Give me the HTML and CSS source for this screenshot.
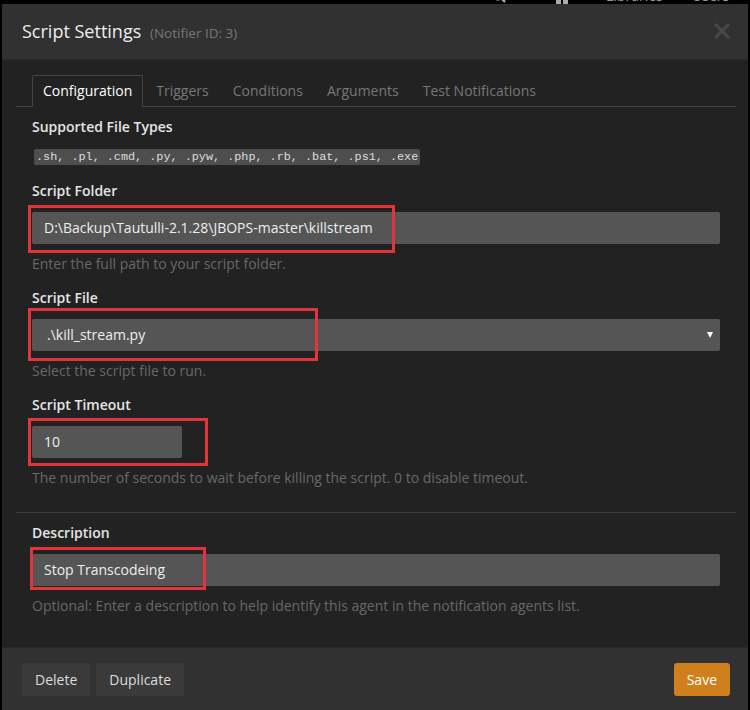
FILE: index.html
```html
<!DOCTYPE html>
<html>
<head>
<meta charset="utf-8">
<link rel="stylesheet" href="styles.css">
</head>
<body>
<div class="topnav">
  <span class="nav-icon nav-search"><svg width="14" height="14" viewBox="0 0 14 14"><circle cx="6" cy="6" r="4.5" fill="none" stroke="#aaa" stroke-width="2"/><path d="M9 9 L13 13" stroke="#aaa" stroke-width="2.4"/></svg></span>
  <span class="nav-icon nav-grid"><svg width="12" height="14" viewBox="0 0 12 14"><rect x="0" y="0" width="5" height="14" fill="#aaa"/><rect x="7" y="0" width="5" height="14" fill="#aaa"/></svg></span>
  <span class="nav-link nav-lib">Libraries</span>
  <span class="nav-link nav-users">Users</span>
</div>
<div class="modal">
  <div class="modal-header">
    <h4 class="modal-title">Script Settings <small class="sub">(Notifier ID: 3)</small></h4>
    <span class="close"><svg width="16" height="16" viewBox="0 0 16 16"><path d="M2 2 L14 14 M14 2 L2 14" stroke="#474747" stroke-width="3.2" stroke-linecap="round"/></svg></span>
  </div>
  <div class="modal-body">
    <ul class="tabs">
      <li class="tab active">Configuration</li>
      <li class="tab">Triggers</li>
      <li class="tab">Conditions</li>
      <li class="tab">Arguments</li>
      <li class="tab">Test Notifications</li>
    </ul>
    <div class="tab-content">
      <div class="group group-first">
        <label class="label">Supported File Types</label>
        <code class="types">.sh, .pl, .cmd, .py, .pyw, .php, .rb, .bat, .ps1, .exe</code>
      </div>
      <div class="group group-second">
        <label class="label">Script Folder</label>
        <div class="field">
          <div class="input">D:\Backup\Tautulli-2.1.28\JBOPS-master\killstream</div>
          <span class="mark mark-folder"></span>
        </div>
        <p class="help">Enter the full path to your script folder.</p>
      </div>
      <div class="group">
        <label class="label">Script File</label>
        <div class="field">
          <div class="input select"><span class="sel-text">.\kill_stream.py</span><span class="caret"></span></div>
          <span class="mark mark-file"></span>
        </div>
        <p class="help">Select the script file to run.</p>
      </div>
      <div class="group">
        <label class="label">Script Timeout</label>
        <div class="field">
          <div class="input input-short">10</div>
          <span class="mark mark-timeout"></span>
        </div>
        <p class="help">The number of seconds to wait before killing the script. 0 to disable timeout.</p>
      </div>
    </div>
    <hr class="sep">
    <div class="tab-content">
      <div class="group group-desc">
        <label class="label">Description</label>
        <div class="field">
          <div class="input">Stop Transcodeing</div>
          <span class="mark mark-desc"></span>
        </div>
        <p class="help">Optional: Enter a description to help identify this agent in the notification agents list.</p>
      </div>
    </div>
  </div>
  <div class="modal-footer">
    <div class="left-btns">
      <button class="btn">Delete</button>
      <button class="btn">Duplicate</button>
    </div>
    <button class="btn btn-save">Save</button>
  </div>
</div>
</body>
</html>
```
FILE: styles.css
```css
* { box-sizing: border-box; }
html, body {
  margin: 0;
  padding: 0;
  background: #000;
  height: 710px;
  overflow: hidden;
  font-family: "Open Sans", "Liberation Sans", sans-serif;
}
.topnav {
  height: 4px;
  overflow: hidden;
  position: relative;
}
.nav-icon, .nav-link {
  position: absolute;
  color: #9a9a9a;
  font-size: 14px;
  line-height: 16px;
}
.nav-search { left: 492px; top: -11px; }
.nav-grid { left: 556px; top: -10px; }
.nav-lib { left: 606px; top: -12px; }
.nav-users { left: 692px; top: -12px; }

.modal {
  margin-left: 2px;
  width: 746px;
  height: 706px;
  background: #222;
  display: flex;
  flex-direction: column;
}
.modal-header {
  height: 56px;
  background: #313131;
  border-bottom: 1px solid #2a2a2a;
  display: flex;
  align-items: center;
  justify-content: space-between;
  padding: 0 18px 0 20px;
}
.modal-title {
  margin: 0;
  font-size: 18px;
  font-weight: 400;
  color: #eee;
  line-height: 24px;
}
.sub {
  font-size: 13.5px;
  color: #777;
  margin-left: 4px;
}
.close {
  display: flex;
  margin-top: -2px;
}
.modal-body {
  flex: 1;
  padding: 15px 12px 0 14px;
}
.tabs {
  list-style: none;
  margin: 0;
  padding: 0 0 0 16px;
  display: flex;
  border-bottom: 1px solid #444;
}
.tab {
  font-size: 14px;
  line-height: 20px;
  padding: 5px 10px;
  border: 1px solid transparent;
  border-bottom: none;
  margin-right: 2px;
  margin-bottom: -1px;
  color: #777;
  border-radius: 2px 2px 0 0;
}
.tab.active {
  color: #fff;
  background: #222;
  border-color: #444;
  height: 32px;
}
.tab-content {
  padding: 0 16px 0 16px;
}
.group { margin-top: 14px; }
.group-first { margin-top: 10px; }
.group-second { margin-top: 16px; }
.label {
  display: block;
  font-size: 14px;
  font-weight: 600;
  color: #e5e5e5;
  line-height: 20px;
  margin-bottom: 11px;
}
.group-first .label { margin-bottom: 12px; }
.types {
  display: block;
  width: fit-content;
  margin-left: 2px;
  font-family: "Liberation Mono", monospace;
  font-size: 11.8px;
  line-height: 16px;
  padding: 0 2px;
  background: #4e4e4e;
  color: #ddd;
  border-radius: 2px;
}
.field { position: relative; }
.input {
  height: 32px;
  background: #555;
  color: #eee;
  font-size: 14px;
  line-height: 32px;
  padding: 0 12px;
  border-radius: 2px;
}
.input-short { width: 150px; }
.select {
  display: flex;
  justify-content: space-between;
  align-items: center;
  padding: 0 7px 0 15px;
}
.caret {
  width: 0;
  height: 0;
  border-left: 3px solid transparent;
  border-right: 3px solid transparent;
  border-top: 6px solid #fff;
}
.help {
  margin: 10px 0 0;
  font-size: 14px;
  line-height: 20px;
  color: #686868;
}
.mark {
  position: absolute;
  border: 3px solid #e1343c;
}
.mark-folder { left: -4px; top: -7px; width: 367px; height: 48px; }
.mark-file { left: -4px; top: -11px; width: 290px; height: 53px; }
.mark-timeout { left: -4px; top: -8px; width: 180px; height: 48px; }
.mark-desc { left: -2px; top: -7px; width: 176px; height: 43px; }
.sep {
  margin: 24px 0 0;
  border: none;
  border-top: 1px solid #3c3c3c;
}
.group-desc { margin-top: 10px; }
.modal-footer {
  height: 63px;
  background: #313131;
  border-top: 1px solid #2a2a2a;
  display: flex;
  align-items: center;
  justify-content: space-between;
  padding: 0 18px 0 20px;
}
.left-btns { display: flex; gap: 6px; }
.btn {
  font-family: "Open Sans", "Liberation Sans", sans-serif;
  font-size: 14px;
  height: 33px;
  padding: 0 13px;
  border: none;
  border-radius: 3px;
  background: #3a3a3a;
  color: #ddd;
}
.btn-save {
  background: #cf7f1b;
  color: #fff;
  padding: 0 13px;
}
```
